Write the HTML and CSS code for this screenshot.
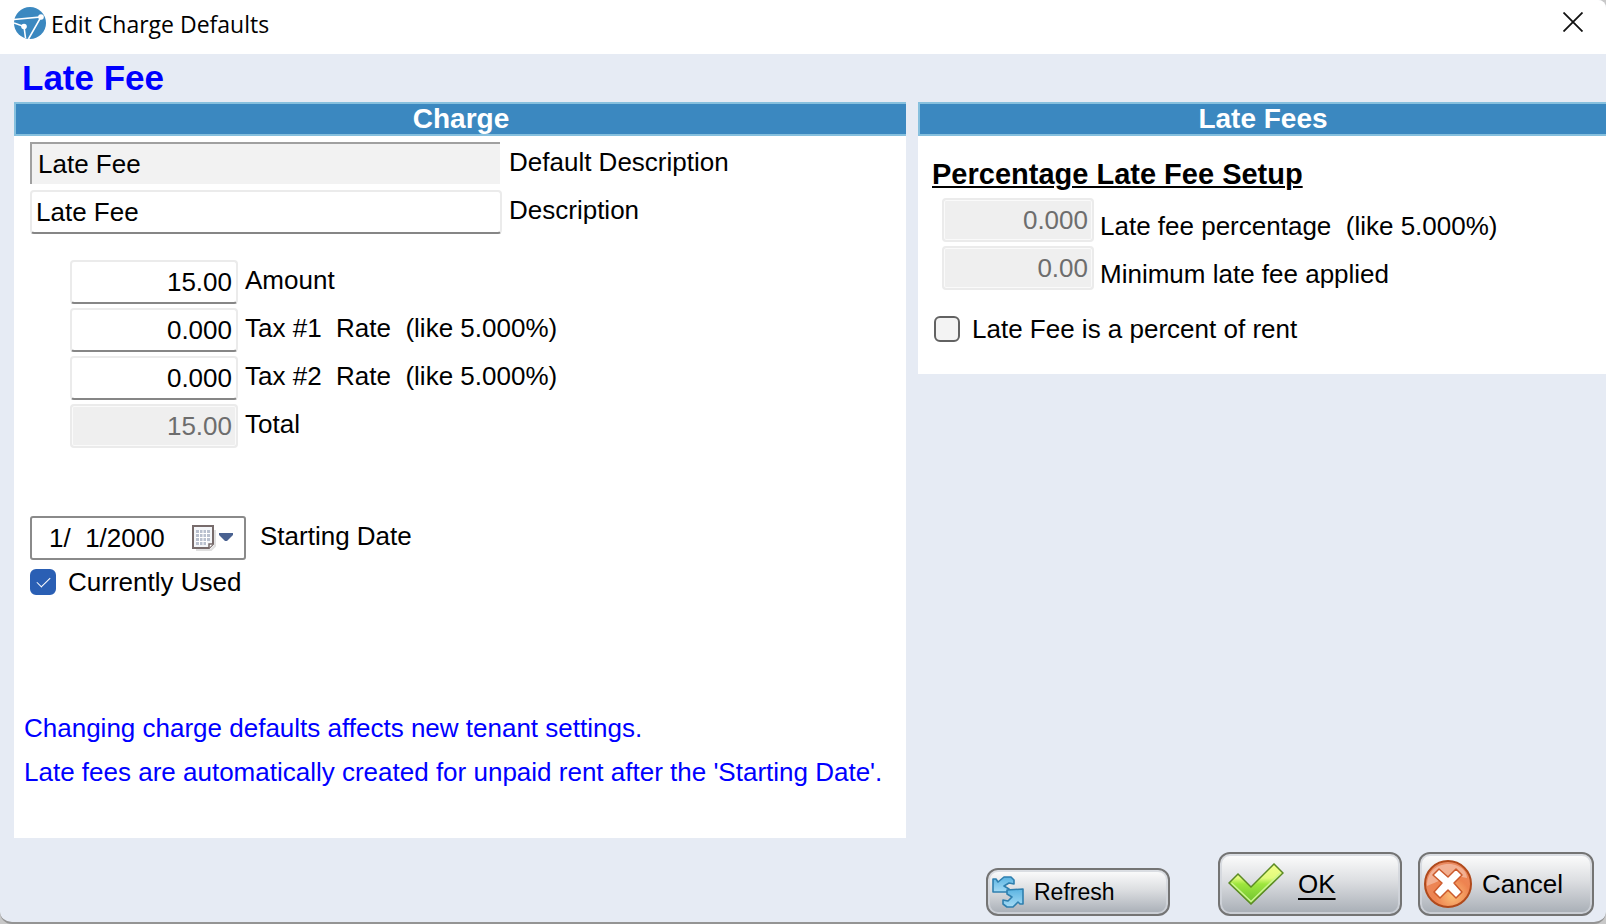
FILE: index.html
```html
<!DOCTYPE html>
<html lang="en">
<head>
    <meta charset="UTF-8">
    <title>Edit Charge Defaults</title>
    <link rel="stylesheet" href="styles.css">
</head>
<body>

<div class="window">
    <header class="titlebar">
        <svg class="logo" viewBox="0 0 32 32" aria-hidden="true">
            <circle cx="16" cy="16" r="16" fill="#3b88c0"/>
            <g fill="none" stroke="#fff" stroke-width="1.6">
                <path d="M0 12.5L27 10L14.5 32"/>
                <path d="M0 16L10 19.5L11.5 31"/>
            </g>
            <circle cx="27" cy="10" r="2.8" fill="#fff"/>
            <circle cx="10" cy="19.5" r="2.8" fill="#fff"/>
        </svg>
        <span class="title">Edit Charge Defaults</span>
        <button class="close" type="button" aria-label="Close">
            <svg viewBox="0 0 20 20"><path d="M0.5 0.5L19.5 19.5M19.5 0.5L0.5 19.5" stroke="#111" stroke-width="1.8"/></svg>
        </button>
    </header>

    <form class="content">
        <h1>Late Fee</h1>

        <div class="panels">
            <section class="panel charge">
                <h2>Charge</h2>
                <div class="fields">
                    <div class="row">
                        <input type="text" id="defaultDescription" class="wide sunken" value="Late Fee" readonly>
                        <label for="defaultDescription">Default Description</label>
                    </div>
                    <div class="row">
                        <input type="text" id="description" class="wide" value="Late Fee">
                        <label for="description">Description</label>
                    </div>

                    <div class="amounts">
                        <div class="row">
                            <input type="text" id="amount" class="number" value="15.00">
                            <label for="amount">Amount</label>
                        </div>
                        <div class="row">
                            <input type="text" id="tax1" class="number" value="0.000">
                            <label for="tax1">Tax #1  Rate  (like 5.000%)</label>
                        </div>
                        <div class="row">
                            <input type="text" id="tax2" class="number" value="0.000">
                            <label for="tax2">Tax #2  Rate  (like 5.000%)</label>
                        </div>
                        <div class="row">
                            <input type="text" id="total" class="number" value="15.00" disabled>
                            <label for="total">Total</label>
                        </div>
                    </div>

                    <div class="row date-row">
                        <div class="date">
                            <input type="text" id="startingDate" value="1/  1/2000">
                            <button type="button" aria-label="Open calendar">
                                <svg viewBox="0 0 42 28">
                                    <path d="M5 26H20L24 22V6" fill="none" stroke="#e0e0e0" stroke-width="2"/>
                                    <path d="M2 2H22V20L18 24H2Z" fill="#f4f6f9" stroke="#776b6b" stroke-width="2"/>
                                    <path d="M22 20H18V24" fill="#fff" stroke="#776b6b" stroke-width="1.5"/>
                                    <path d="M5 6H19V17H16V21H5Z" fill="#b9c0ce"/>
                                    <path d="M5 9.5H19M5 13.5H19M5 17.5H16M8.5 6V21M12 6V21M15.5 6V21" stroke="#fff" stroke-width="1"/>
                                    <path d="M28 9H42V11L36 17H34L28 11Z" fill="#4a6291"/>
                                </svg>
                            </button>
                        </div>
                        <label for="startingDate">Starting Date</label>
                    </div>
                    <div class="check">
                        <input type="checkbox" id="currentlyUsed" checked>
                        <label for="currentlyUsed">Currently Used</label>
                    </div>
                </div>

                <div class="notes">
                    <p>Changing charge defaults affects new tenant settings.</p>
                    <p>Late fees are automatically created for unpaid rent after the 'Starting Date'.</p>
                </div>
            </section>

            <section class="panel late-fees">
                <h2>Late Fees</h2>
                <div class="fields">
                    <h3>Percentage Late Fee Setup</h3>
                    <div class="row">
                        <input type="text" id="percentage" class="number" value="0.000" disabled>
                        <label for="percentage">Late fee percentage  (like 5.000%)</label>
                    </div>
                    <div class="row">
                        <input type="text" id="minimum" class="number" value="0.00" disabled>
                        <label for="minimum">Minimum late fee applied</label>
                    </div>
                    <div class="check">
                        <input type="checkbox" id="percentOfRent">
                        <label for="percentOfRent">Late Fee is a percent of rent</label>
                    </div>
                </div>
            </section>
        </div>

        <div class="buttons">
            <button class="refresh" type="button">
                <svg viewBox="0 0 32 32" aria-hidden="true">
                    <defs>
                        <linearGradient id="blue" x1="0" y1="0" x2="0" y2="1">
                            <stop offset="0" stop-color="#5bb4e2"/>
                            <stop offset="1" stop-color="#a5dbf5"/>
                        </linearGradient>
                    </defs>
                    <g fill="url(#blue)" stroke="#2f7fae" stroke-width="1.6" stroke-linejoin="round">
                        <path d="M1 3H4L6 6L12 1H19L22 4V8L17 7L12 10L17 13V16H1Z"/>
                        <path d="M31 28H28L26 26L21 31H15L11 28V24L16 25L20 21L15 18V14L31 13Z"/>
                    </g>
                </svg>
                <span>Refresh</span>
            </button>
            <button class="ok" type="submit">
                <svg viewBox="0 0 56 42" aria-hidden="true">
                    <defs>
                        <linearGradient id="green" x1="0" y1="0" x2="0" y2="1">
                            <stop offset="0" stop-color="#f4ff8c"/>
                            <stop offset="0.35" stop-color="#e2fb7c"/>
                            <stop offset="0.5" stop-color="#9ee63e"/>
                            <stop offset="1" stop-color="#6cc02e"/>
                        </linearGradient>
                    </defs>
                    <path d="M1 20L10 11L23 24L46 1L55 10L23 41Z" fill="url(#green)" stroke="#5b8a24" stroke-width="1.5"/>
                    <path d="M3.5 20L23 38.5L52.5 10" fill="none" stroke="#cdf591" stroke-width="1.5"/>
                </svg>
                <span><u>OK</u></span>
            </button>
            <button class="cancel" type="button">
                <svg viewBox="0 0 48 48" aria-hidden="true">
                    <defs>
                        <radialGradient id="orange" cx="0.6" cy="0.75" r="0.75">
                            <stop offset="0" stop-color="#fcc078"/>
                            <stop offset="0.5" stop-color="#ee8350"/>
                            <stop offset="1" stop-color="#e98a62"/>
                        </radialGradient>
                    </defs>
                    <circle cx="24" cy="24" r="23" fill="url(#orange)" stroke="#b04a1c" stroke-width="2"/>
                    <path d="M3 26C3 9 16 3 27 4C40 6 43 14 43 18C28 14 17 20 3 26Z" fill="#fff" opacity="0.35"/>
                    <path d="M9 15L15 9L24 17L32 9L38 15L30 23L38 32L32 38L24 30L16 38L10 32L18 23Z" fill="#fff" stroke="#cc5a2c" stroke-width="1.5" stroke-linejoin="round"/>
                </svg>
                <span>Cancel</span>
            </button>
        </div>
    </form>
</div>

</body>
</html>
```
FILE: styles.css
```css
* {
    box-sizing: border-box;
}
body {
    margin: 0;
    background-color: #c8c8c8;
    font-family: "Liberation Sans", Arial, sans-serif;
    font-size: 26px;
    line-height: 30px;
    color: #000;
}
h1, h2, h3, p {
    margin: 0;
}
input, button {
    font: inherit;
    color: inherit;
}
label {
    white-space: pre;
}
.window {
    display: flex;
    flex-direction: column;
    min-height: 100vh;
    background-color: #e6ebf4;
    border-bottom: 2px solid #949494;
    border-radius: 0 8px 12px 12px;
    overflow: hidden;
}

/* title bar */
.titlebar {
    display: flex;
    align-items: center;
    height: 54px;
    padding: 0 22px 8px 14px;
    background-color: #fff;
}
.logo {
    width: 32px;
    height: 32px;
}
.title {
    margin-left: 5px;
    padding-top: 2px;
    font-family: "Open Sans", "Segoe UI", sans-serif;
    font-size: 23px;
}
.close {
    display: flex;
    margin-left: auto;
    padding: 0 1px 2px 0;
    border: none;
    background: none;
}
.close svg {
    width: 20px;
    height: 20px;
}

/* content */
.content {
    display: flex;
    flex-direction: column;
    flex: 1;
}
h1 {
    padding: 4px 0 4px 22px;
    font-size: 35px;
    line-height: 40px;
    color: #00f;
}
.panels {
    display: grid;
    grid-template-columns: 892fr 688fr;
    gap: 12px;
    flex: 1;
    padding-left: 14px;
}
.panel {
    background-color: #fff;
}
.panel h2 {
    height: 34px;
    border: 2px solid #86c0de;
    border-right: none;
    background-color: #3b88c0;
    color: #fff;
    font-size: 28px;
    line-height: 30px;
    text-align: center;
}
.fields {
    display: flex;
    flex-direction: column;
    gap: 4px;
}
.row {
    display: flex;
    align-items: center;
    gap: 7px;
    height: 44px;
}
.row label {
    padding-bottom: 4px;
}
.row > input {
    height: 44px;
    padding: 0 4px;
    border: 2px solid #ebebeb;
    border-bottom-color: #868686;
    border-radius: 4px;
    background-color: #fff;
}
.wide {
    width: 472px;
}
.row > .sunken {
    align-self: flex-start;
    width: 470px;
    height: 42px;
    margin-right: 2px;
    padding-left: 6px;
    border: none;
    border-top: 2px solid #a0a0a0;
    border-left: 2px solid #a0a0a0;
    border-radius: 0;
    background-color: #f2f2f2;
}
.number {
    width: 168px;
    text-align: right;
}
.row > input:disabled {
    border-color: #ebebeb;
    background-color: #efefef;
    box-shadow: inset 0 0 0 1px #fafafa;
    color: #6d6d6d;
}
.check {
    display: flex;
    align-items: center;
    gap: 12px;
}
.check input {
    appearance: none;
    width: 26px;
    height: 26px;
    margin: 0;
    border: 2px solid #626262;
    border-radius: 6px;
    background-color: #f3f3f3;
}
.check input:checked {
    border-color: #2a5fb4;
    background-color: #2a5fb4;
}
.check input:checked::after {
    content: "";
    display: block;
    width: 12px;
    height: 6px;
    margin: 6px 5px;
    border-left: 1px solid #fff;
    border-bottom: 1px solid #fff;
    transform: rotate(-45deg);
}

/* charge panel */
.charge {
    display: flex;
    flex-direction: column;
}
.charge .fields {
    padding: 6px 16px;
}
.amounts {
    display: flex;
    flex-direction: column;
    gap: 4px;
    margin: 22px 0 64px 40px;
}
.date-row {
    gap: 14px;
}
.date {
    display: flex;
    align-items: center;
    width: 216px;
    height: 44px;
    padding: 0 11px 0 17px;
    border: 2px solid #8a8a8a;
    border-radius: 3px;
    background-color: #fff;
}
.date input {
    flex: 1;
    min-width: 0;
    padding: 0;
    border: none;
    background: none;
}
.date button {
    display: flex;
    padding: 0;
    border: none;
    background: none;
}
.date svg {
    width: 42px;
    height: 28px;
}
.charge .check {
    padding-top: 3px;
}
.notes {
    margin-top: auto;
    padding: 0 0 44px 10px;
    color: #00f;
    line-height: 44px;
}

/* late fees panel */
.late-fees {
    align-self: start;
}
.late-fees .fields {
    padding: 22px 14px 30px;
}
h3 {
    margin-bottom: 4px;
    font-size: 29px;
    line-height: 32px;
    text-decoration: underline;
    text-decoration-thickness: 2px;
    text-underline-offset: 2px;
}
.late-fees .row {
    gap: 6px;
    padding-left: 10px;
}
.late-fees .row label {
    padding: 12px 0 0;
}
.late-fees .number {
    width: 152px;
}
.late-fees .check {
    padding: 20px 0 0 2px;
}

/* buttons */
.buttons {
    display: flex;
    justify-content: flex-end;
    align-items: flex-end;
    gap: 16px;
    padding: 14px 12px 6px;
}
.buttons button {
    display: flex;
    align-items: center;
    height: 64px;
    padding: 0 4px;
    border: 2px solid #747474;
    border-radius: 12px;
    background: linear-gradient(#fdfdfd, #dcdee1 45%, #a7adb5);
    box-shadow: inset 0 0 0 2px rgba(210, 214, 220, 0.8);
}
.buttons .refresh {
    width: 184px;
    height: 48px;
    margin-right: 32px;
    font-size: 23px;
}
.refresh svg {
    width: 32px;
    height: 32px;
    margin-right: 10px;
}
.buttons .ok {
    width: 184px;
    padding-left: 8px;
}
.ok svg {
    width: 56px;
    height: 42px;
    margin-right: 14px;
}
.ok u {
    text-decoration-thickness: 2px;
    text-underline-offset: 5px;
}
.buttons .cancel {
    width: 176px;
}
.cancel svg {
    width: 48px;
    height: 48px;
    margin-right: 10px;
}
```
